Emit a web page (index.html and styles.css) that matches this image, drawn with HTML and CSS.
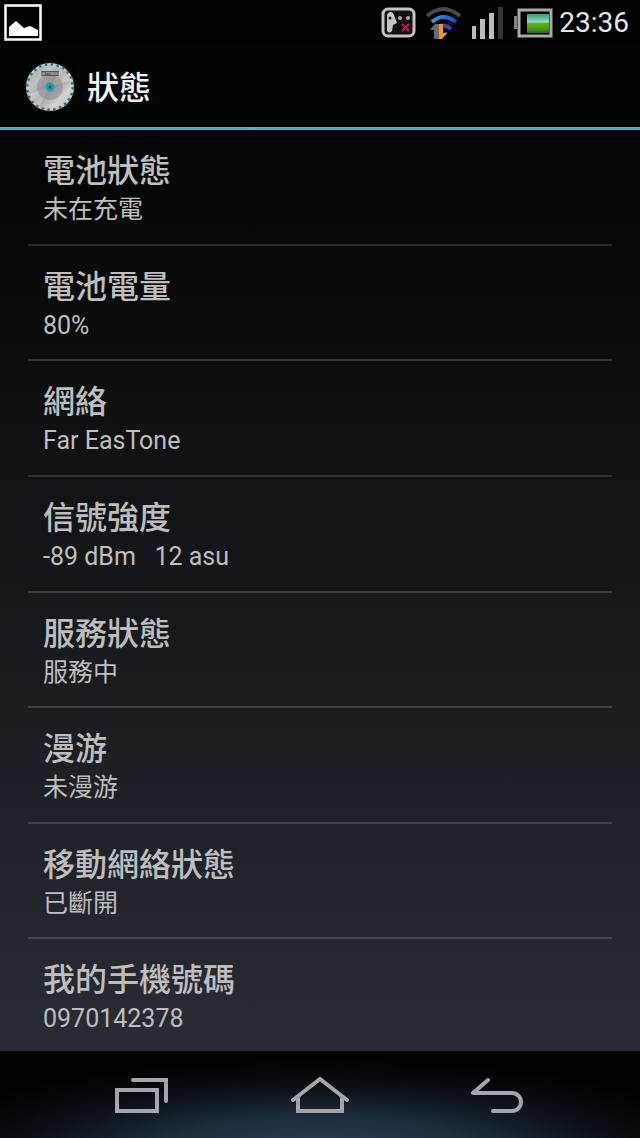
FILE: index.html
```html
<!DOCTYPE html>
<html lang="zh-Hant">
<head>
    <meta charset="UTF-8">
    <meta name="viewport" content="width=device-width, initial-scale=1.0">
    <title>狀態</title>
    <link rel="stylesheet" href="styles.css">
</head>
<body>

<!-- Status bar -->
<div class="status-bar">
    <svg class="notification" width="40" height="40" viewBox="0 0 40 40" aria-hidden="true">
        <rect x="1.5" y="2.5" width="35" height="34" fill="none" stroke="#fff" stroke-width="2.5"/>
        <path d="M5 33V24L12 18 20 25 26 23 34 27V33Z" fill="#fff"/>
    </svg>
    <div class="status-icons">
        <svg width="36" height="32" viewBox="0 0 36 32" aria-hidden="true">
            <rect x="2" y="2" width="31" height="27" rx="5" fill="#111" stroke="#c4c4c4" stroke-width="3"/>
            <path d="M6 10Q6 5 10 5 12 5 13 8L16 16 12 18 11 24Q8 27 6 24Z" fill="#c4c4c4"/>
            <circle cx="9" cy="11" r="1.5" fill="#222"/>
            <circle cx="19" cy="11" r="2" fill="#aaa"/>
            <circle cx="27" cy="11" r="2" fill="#aaa"/>
            <path d="M21 17L28 24M28 17L21 24" stroke="#c3194f" stroke-width="2"/>
        </svg>
        <svg width="38" height="34" viewBox="0 0 38 34" aria-hidden="true">
            <defs>
                <linearGradient id="wifi" x1="0" x2="1">
                    <stop offset="0" stop-color="#3b9be8"/>
                    <stop offset="1" stop-color="#0b4fc0"/>
                </linearGradient>
            </defs>
            <path d="M2 10Q18 -4 35 10" fill="none" stroke="#484848" stroke-width="4"/>
            <path d="M7 16Q18 6 31 16" fill="none" stroke="url(#wifi)" stroke-width="4"/>
            <path d="M15 20Q20 18 26 23" fill="none" stroke="#0b59c8" stroke-width="4"/>
            <path d="M19 26H23L20 31Z" fill="#0b4fa5"/>
            <path d="M9 33V24H5L10 18H14V33Z" fill="#6a6a6a"/>
            <path d="M14 18H18V27H22L17 33H14Z" fill="#ff911c"/>
        </svg>
        <svg width="34" height="34" viewBox="0 0 34 34" aria-hidden="true">
            <path d="M1 20H5V33H1ZM9 13H14V33H9ZM18 7H23V33H18Z" fill="#bcbcbc"/>
            <path d="M27 1H32V33H27Z" fill="#333735"/>
        </svg>
        <svg width="40" height="30" viewBox="0 0 40 30" aria-hidden="true">
            <defs>
                <linearGradient id="charge" x1="0" y1="0" x2="0" y2="1">
                    <stop offset="0" stop-color="#349576"/>
                    <stop offset=".42" stop-color="#9adbd0"/>
                    <stop offset=".5" stop-color="#64b01e"/>
                    <stop offset=".85" stop-color="#3d9210"/>
                    <stop offset="1" stop-color="#226437"/>
                </linearGradient>
            </defs>
            <path d="M1 8H4V21H1Z" fill="#858585"/>
            <rect x="6" y="2" width="32" height="26" fill="none" stroke="#aaa" stroke-width="3"/>
            <rect x="14" y="6" width="22" height="19" fill="url(#charge)"/>
        </svg>
    </div>
    <time class="clock">23:36</time>
</div>

<header class="action-bar">
    <svg width="50" height="50" viewBox="0 0 50 50" aria-hidden="true">
        <defs>
            <linearGradient id="disc" x1="0" y1="0" x2="1" y2="1">
                <stop offset="0" stop-color="#999"/>
                <stop offset=".3" stop-color="#c4c4c4"/>
                <stop offset=".5" stop-color="#999"/>
                <stop offset=".75" stop-color="#d4d4d4"/>
                <stop offset="1" stop-color="#aaa"/>
            </linearGradient>
        </defs>
        <circle cx="25" cy="25" r="23" fill="url(#disc)"/>
        <circle cx="25" cy="25" r="23" fill="none" stroke="#c0caca" stroke-width="2"/>
        <circle cx="25" cy="25" r="23" fill="none" stroke="#2f6f75" stroke-width="3" stroke-dasharray="2.5 3.52"/>
        <path d="M25 25L36 6A22 22 0 0 1 46 18Z" fill="#fff" fill-opacity=".3"/>
        <path d="M25 25L14 44A22 22 0 0 1 4 32Z" fill="#fff" fill-opacity=".3"/>
        <circle cx="25" cy="25" r="13" fill="#888" fill-opacity=".5"/>
        <circle cx="25" cy="25" r="3" fill="#064b55" stroke="#16a4b0" stroke-width="3"/>
        <rect x="16" y="9" width="18" height="5" rx="1" fill="#555"/>
        <text class="disc-label" x="25" y="13" text-anchor="middle">SETTINGS</text>
    </svg>
    <h1>狀態</h1>
</header>

<!-- Phone details -->
<main>
    <dl class="status-list">
        <div class="item">
            <dt>電池狀態</dt>
            <dd>未在充電</dd>
        </div>
        <div class="item">
            <dt>電池電量</dt>
            <dd>80%</dd>
        </div>
        <div class="item">
            <dt>網絡</dt>
            <dd>Far EasTone</dd>
        </div>
        <div class="item">
            <dt>信號強度</dt>
            <dd>-89 dBm &nbsp; 12 asu</dd>
        </div>
        <div class="item">
            <dt>服務狀態</dt>
            <dd>服務中</dd>
        </div>
        <div class="item">
            <dt>漫游</dt>
            <dd>未漫游</dd>
        </div>
        <div class="item">
            <dt>移動網絡狀態</dt>
            <dd>已斷開</dd>
        </div>
        <div class="item">
            <dt>我的手機號碼</dt>
            <dd>0970142378</dd>
        </div>
    </dl>
</main>

<!-- Navigation keys -->
<nav class="nav-bar">
    <button type="button" aria-label="最近使用的應用程式">
        <svg width="60" height="40" viewBox="0 0 60 40">
            <path d="M5 15H45V36H5Z"/>
            <path d="M21 5H54V26" stroke-linecap="round"/>
        </svg>
    </button>
    <button type="button" aria-label="主畫面">
        <svg width="60" height="40" viewBox="0 0 60 40">
            <path d="M3 25L30 4 57 25" stroke-linecap="round"/>
            <path d="M8 22V36H52V22"/>
        </svg>
    </button>
    <button type="button" aria-label="返回">
        <svg width="60" height="40" viewBox="0 0 60 40">
            <path d="M20 5L5 18H44A9 9 0 0 1 44 36H25" stroke-linecap="round" stroke-linejoin="round"/>
        </svg>
    </button>
</nav>

</body>
</html>
```
FILE: styles.css
```css
* {
    box-sizing: border-box;
}
body {
    margin: 0;
    min-height: 100vh;
    display: flex;
    flex-direction: column;
    background-color: #000;
    color: #bebebe;
    font-family: Roboto, "Noto Sans CJK TC", sans-serif;
}
svg {
    display: block;
    flex: none;
}
.status-bar {
    display: flex;
    align-items: center;
    height: 44px;
    padding: 0 11px 0 4px;
}
.notification {
    margin-top: 2px;
}
.status-icons {
    display: flex;
    align-items: center;
    gap: 8px;
    margin-left: auto;
    padding-top: 2px;
}
.clock {
    margin-left: 6px;
    color: #e8e8e8;
    font-size: 28px;
    line-height: 44px;
    padding-top: 2px;
}
.action-bar {
    display: flex;
    align-items: center;
    gap: 12px;
    height: 86px;
    padding: 2px 25px 0;
    border-bottom: 3px solid #33b5e5;
    background-color: #020303;
}
.action-bar h1 {
    margin: 0;
    padding-top: 2px;
    color: #f3f3f3;
    font-size: 32px;
    font-weight: 500;
    line-height: 40px;
}
.disc-label {
    fill: #ddd;
    font-size: 4px;
}
main {
    flex: 1;
    display: flex;
    background: linear-gradient(#020303, #15181b 50%, #282c34);
}
.status-list {
    flex: 1;
    display: grid;
    margin: 0;
    padding: 0 28px;
}
.item {
    padding: 21px 15px 14px;
    border-bottom: 2px solid rgba(255, 255, 255, 0.15);
}
.item:last-child {
    padding-bottom: 12px;
    border-bottom: 0;
}
.item dt {
    font-size: 32px;
    font-weight: 500;
    line-height: 40px;
}
.item dd {
    margin: 0;
    font-size: 25px;
    line-height: 38px;
}
.nav-bar {
    display: flex;
    justify-content: center;
    gap: 118px;
    height: 87px;
    background: radial-gradient(ellipse 65% 110% at 50% 120%, #27455a, #1b2e3b 40%, #0b1116 70%, #000);
}
.nav-bar button {
    padding: 0;
    border: 0;
    background: none;
    cursor: pointer;
}
.nav-bar path {
    fill: none;
    stroke: #a3a6a9;
    stroke-width: 4;
}
```
